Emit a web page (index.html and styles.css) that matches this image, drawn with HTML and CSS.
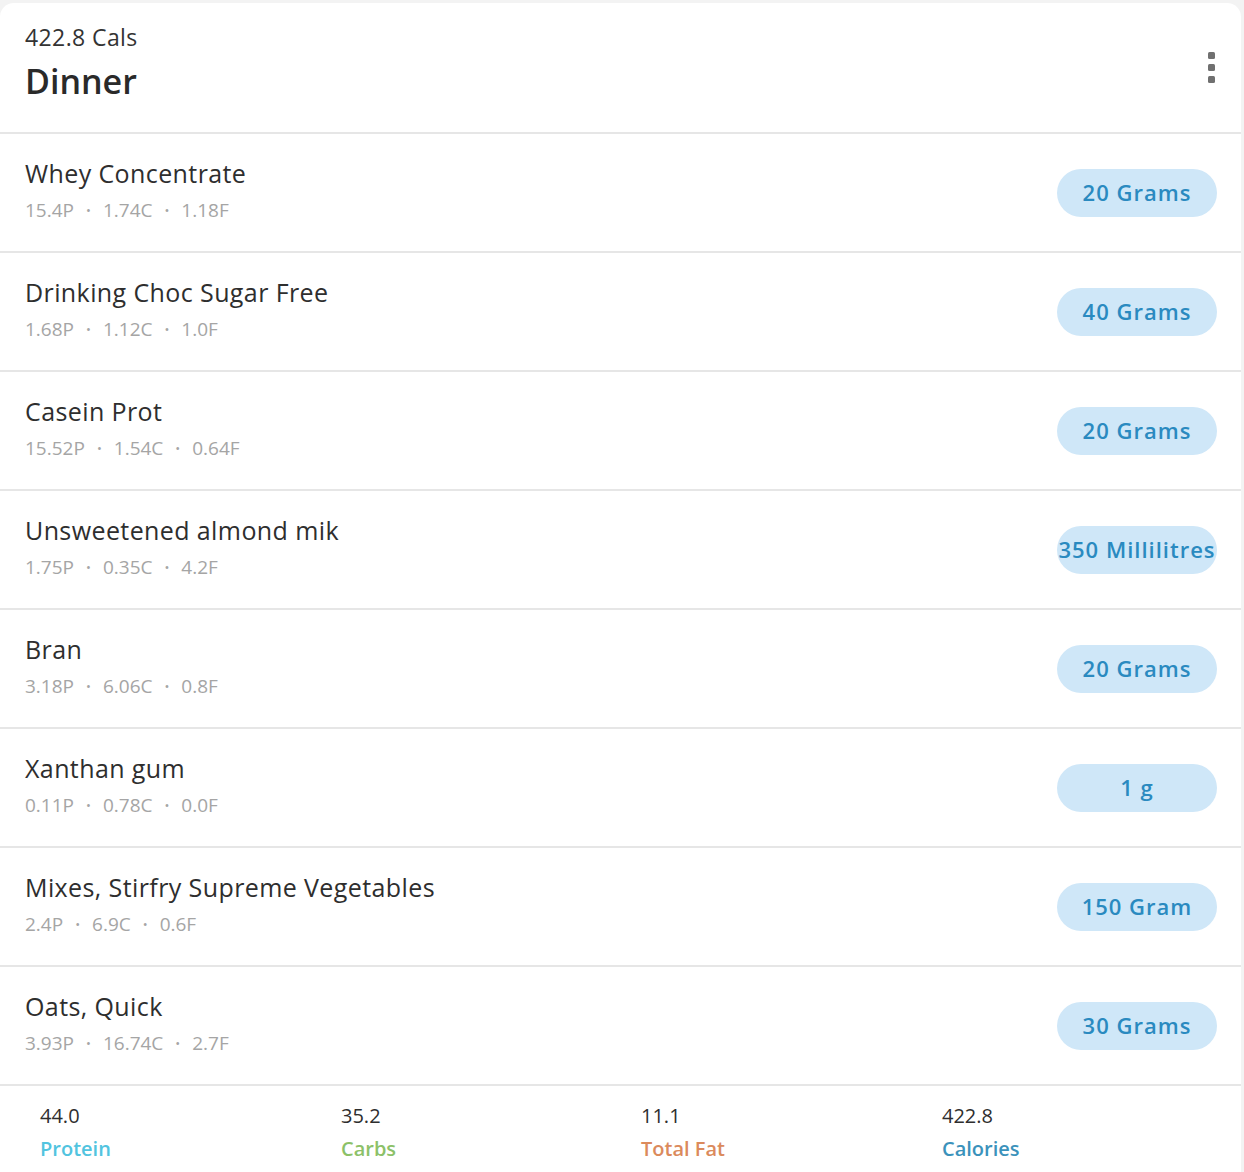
FILE: index.html
```html
<!DOCTYPE html>
<html>
<head>
<meta charset="utf-8">
<link rel="stylesheet" href="styles.css">
</head>
<body>
<div class="card">
  <div class="header">
    <div class="header-text">
      <div class="cals">422.8 Cals</div>
      <div class="meal">Dinner</div>
    </div>
    <div class="kebab"><span></span><span></span><span></span></div>
  </div>
  <div class="row">
    <div class="info"><div class="name">Whey Concentrate</div><div class="macros">15.4P<i>•</i>1.74C<i>•</i>1.18F</div></div>
    <div class="pill">20 Grams</div>
  </div>
  <div class="row">
    <div class="info"><div class="name">Drinking Choc Sugar Free</div><div class="macros">1.68P<i>•</i>1.12C<i>•</i>1.0F</div></div>
    <div class="pill">40 Grams</div>
  </div>
  <div class="row">
    <div class="info"><div class="name">Casein Prot</div><div class="macros">15.52P<i>•</i>1.54C<i>•</i>0.64F</div></div>
    <div class="pill">20 Grams</div>
  </div>
  <div class="row">
    <div class="info"><div class="name">Unsweetened almond mik</div><div class="macros">1.75P<i>•</i>0.35C<i>•</i>4.2F</div></div>
    <div class="pill">350 Millilitres</div>
  </div>
  <div class="row">
    <div class="info"><div class="name">Bran</div><div class="macros">3.18P<i>•</i>6.06C<i>•</i>0.8F</div></div>
    <div class="pill">20 Grams</div>
  </div>
  <div class="row">
    <div class="info"><div class="name">Xanthan gum</div><div class="macros">0.11P<i>•</i>0.78C<i>•</i>0.0F</div></div>
    <div class="pill">1 g</div>
  </div>
  <div class="row">
    <div class="info"><div class="name">Mixes, Stirfry Supreme Vegetables</div><div class="macros">2.4P<i>•</i>6.9C<i>•</i>0.6F</div></div>
    <div class="pill">150 Gram</div>
  </div>
  <div class="row">
    <div class="info"><div class="name">Oats, Quick</div><div class="macros">3.93P<i>•</i>16.74C<i>•</i>2.7F</div></div>
    <div class="pill">30 Grams</div>
  </div>
  <div class="totals">
    <div class="total"><div class="val">44.0</div><div class="lbl protein">Protein</div></div>
    <div class="total"><div class="val">35.2</div><div class="lbl carbs">Carbs</div></div>
    <div class="total"><div class="val">11.1</div><div class="lbl fat">Total Fat</div></div>
    <div class="total"><div class="val">422.8</div><div class="lbl calories">Calories</div></div>
  </div>
</div>
</body>
</html>
```

FILE: styles.css
```css
* { box-sizing: border-box; }
html, body { margin: 0; padding: 0; }
body {
  background: #f3f3f3;
  font-family: "Open Sans", "Liberation Sans", sans-serif;
  color: #2e2e2e;
  width: 1244px;
  height: 1172px;
  overflow: hidden;
}
.card {
  margin: 3px 3px 0 0;
  background: #fff;
  border-radius: 14px 14px 0 0;
  height: 1169px;
}
.header {
  height: 131px;
  display: flex;
  align-items: center;
  justify-content: space-between;
  padding: 0 25px 0 25px;
  border-bottom: 2px solid #e6e6e6;
}
.header-text { margin-bottom: 10px; }
.cals { font-size: 23px; line-height: 28px; color: #333; letter-spacing: 0.4px; }
.meal { font-size: 34px; line-height: 42px; font-weight: 600; color: #2a2a2a; margin-top: 9px; }
.kebab { display: flex; flex-direction: column; gap: 5px; margin-right: 1px; }
.kebab span { width: 7px; height: 7px; background: #707070; border-radius: 1.5px; }
.row {
  height: 119px;
  display: flex;
  align-items: center;
  justify-content: space-between;
  padding: 0 24px 0 25px;
  border-bottom: 2px solid #e6e6e6;
}
.info { margin-bottom: 3px; }
.name { font-size: 25px; line-height: 30px; color: #2e2e2e; letter-spacing: 0.4px; }
.macros { font-size: 19px; line-height: 24px; color: #a5a5a5; margin-top: 10px; }
.macros i { font-style: normal; font-size: 13px; margin: 0 12px; position: relative; top: -2px; }
.pill {
  width: 160px;
  height: 48px;
  border-radius: 24px;
  background: #cfe7f8;
  color: #2a8ac0;
  font-size: 22px;
  font-weight: 600;
  letter-spacing: 1px;
  line-height: 47px;
  text-align: center;
  white-space: nowrap;
}
.totals {
  display: grid;
  grid-template-columns: 301px 300px 301px 1fr;
  padding: 16px 0 0 40px;
}
.val { font-size: 20px; line-height: 28px; color: #2e2e2e; }
.lbl { font-size: 20px; line-height: 28px; font-weight: 600; margin-top: 5px; }
.protein { color: #52c4df; }
.carbs { color: #8cc168; }
.fat { color: #db8a5c; }
.calories { color: #3b92bb; }
```
